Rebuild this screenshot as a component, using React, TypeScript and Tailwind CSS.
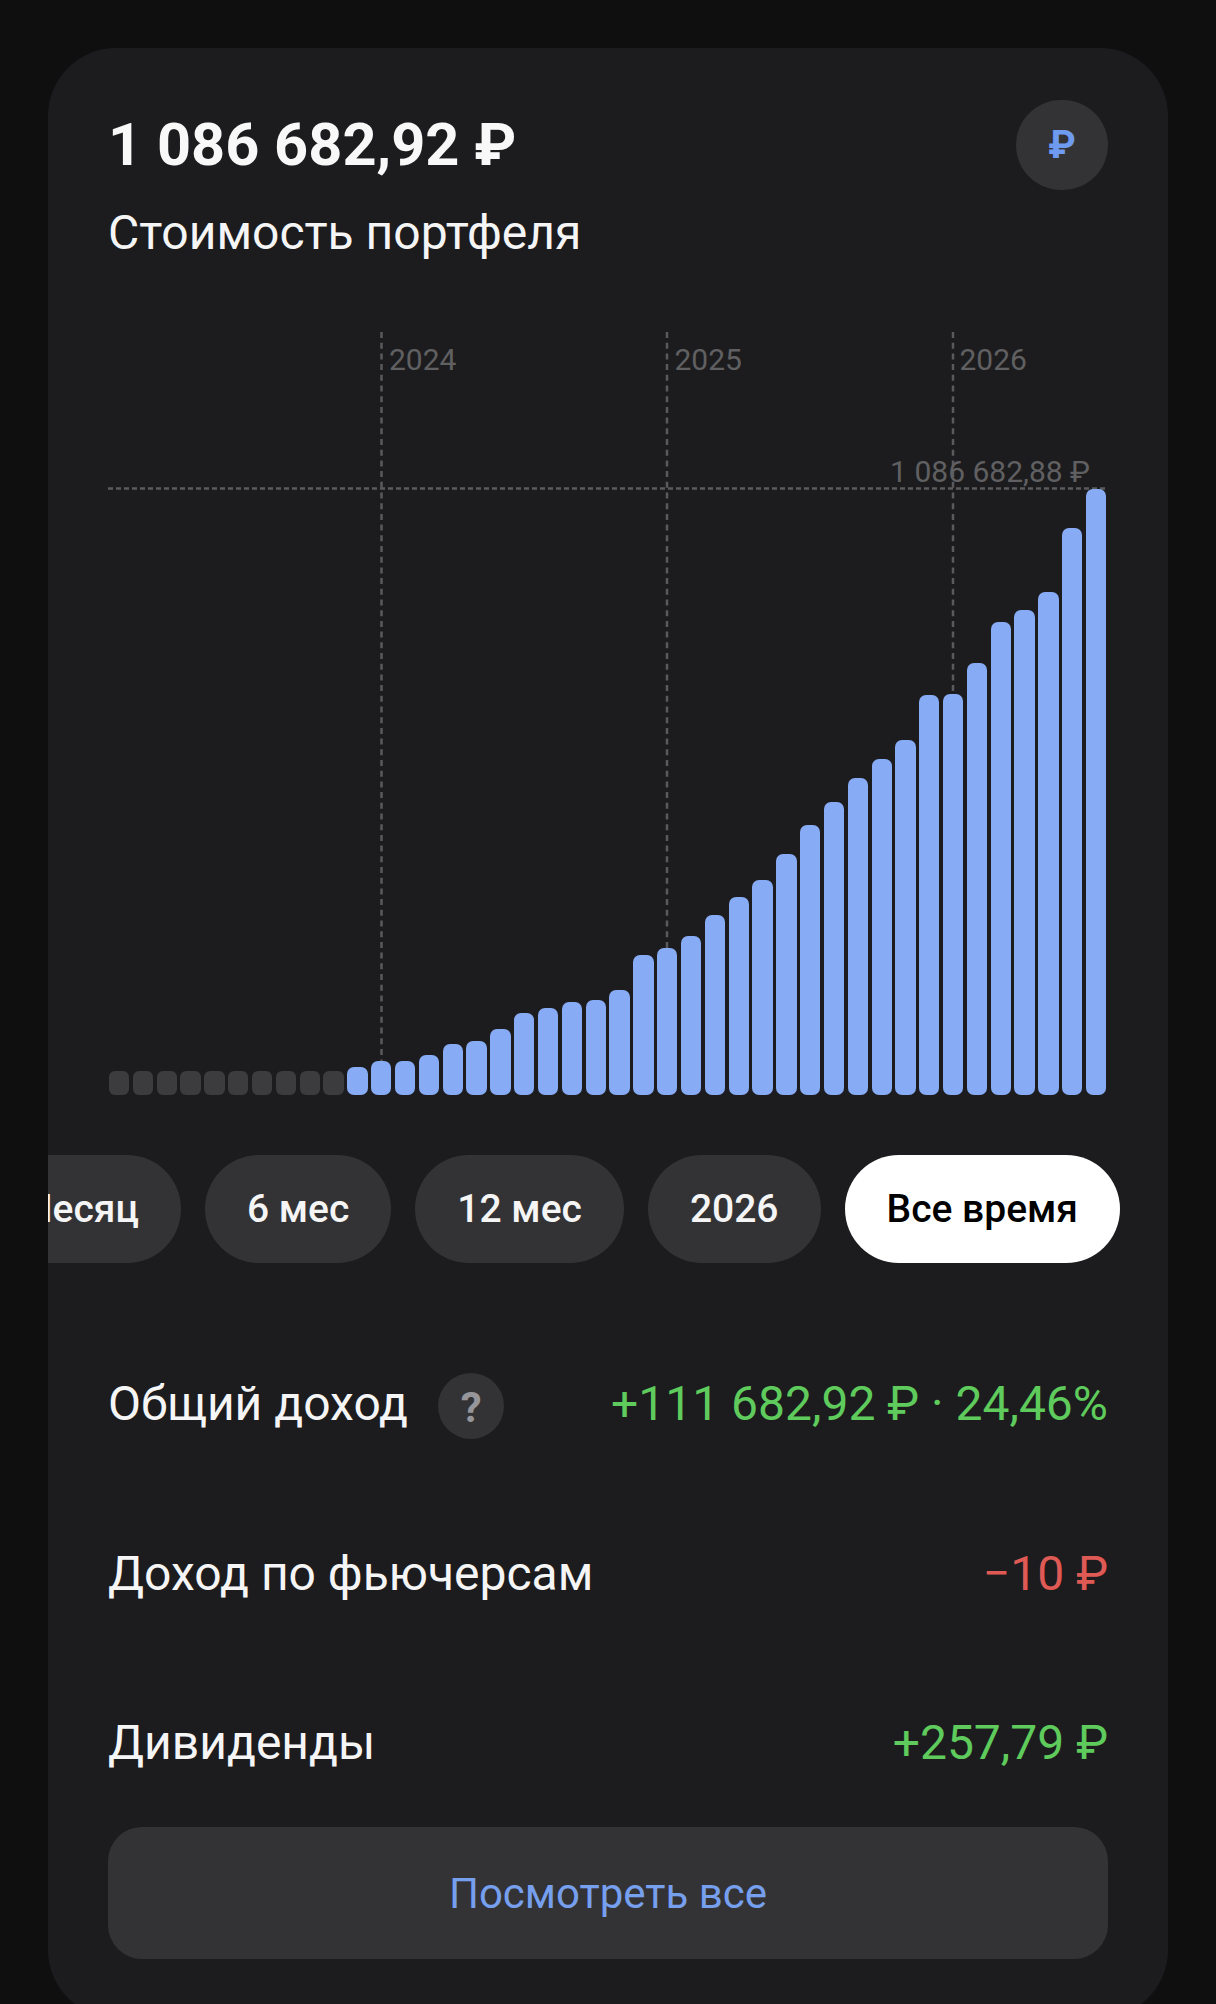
const tops = [1067,1061,1061,1055,1044,1041,1029,1013,1008,1002,1000,990,955,948,936,915,897,880,854,825,802,778,759,740,695,694,663,622,610,592,528,489];

function GridLines() {
  return (
    <svg className="absolute left-0 top-0" width="1000" height="763" fill="none">
      {[273.5, 559, 845].map((x) => (
        <line key={x} x1={x} y1="0" x2={x} y2="763" stroke="#5a5a5c" strokeWidth="2.5" strokeDasharray="6 4.7" />
      ))}
      <line x1="0" y1="156.5" x2="1000" y2="156.5" stroke="#5a5a5c" strokeWidth="2.5" strokeDasharray="5 3" />
    </svg>
  );
}

function Pill({ label, active }: { label: string; active?: boolean }) {
  return (
    <div className={`flex h-[108px] shrink-0 items-center rounded-full px-[42px] text-[39px] font-medium ${active ? "bg-white text-black" : "bg-[#333335] text-[#f5f5f6]"}`}>
      {label}
    </div>
  );
}

function Row({ label, children, mt }: { label: React.ReactNode; children: React.ReactNode; mt: string }) {
  return (
    <div className={`flex h-[66px] items-center justify-between ${mt}`}>
      <div className="flex items-center text-[48px] leading-[52px] text-[#f5f5f6]">{label}</div>
      <div className="text-[48px] leading-[52px]">{children}</div>
    </div>
  );
}

export default function App() {
  return (
    <div className="h-[2004px] overflow-hidden bg-[#0f0f10] px-12 pt-12 font-['Roboto',sans-serif]">
      <div className="h-[1970px] overflow-hidden rounded-[68px] bg-[#1c1c1e] pt-[52px]">
        <div className="flex items-start justify-between px-[60px]">
          <div>
            <div className="mt-[11px] text-[59.5px] font-bold leading-[68px] text-[#f8f8f9]">1 086 682,92 ₽</div>
            <div className="mt-[28px] text-[48px] leading-[52px] text-[#f5f5f6]">Стоимость портфеля</div>
          </div>
          <div className="flex h-[90px] w-[92px] items-center justify-center rounded-full bg-[#333335] text-[39px] font-bold leading-none text-[#6e9bef]">₽</div>
        </div>

        <div className="relative mx-[60px] mt-[73px] h-[763px]">
          <GridLines />
          {[["2024", "left-[281px]"], ["2025", "left-[566.5px]"], ["2026", "left-[851.5px]"]].map(([y, pos]) => (
            <div key={y} className={`absolute top-[10px] text-[30px] leading-[36px] text-[#606062] ${pos}`}>{y}</div>
          ))}
          <div className="absolute right-[18px] top-[122px] text-[30px] leading-[36px] text-[#606062]">1 086 682,88 ₽</div>
          <div className="absolute bottom-0 left-[1px] flex w-[997px] items-end gap-[3.5px]">
            {Array.from({ length: 10 }).map((_, i) => (
              <div key={i} className="h-[24px] flex-1 rounded-[6px] bg-[#3c3c3e]" />
            ))}
            {tops.map((t, i) => (
              <div key={i} className="flex-1 rounded-[7px] bg-[#87acf5]" style={{ height: 1095 - t }} />
            ))}
          </div>
        </div>

        <div className="mt-[60px] flex justify-end gap-6 overflow-hidden pr-[48px]">
          <Pill label="Месяц" />
          <Pill label="6 мес" />
          <Pill label="12 мес" />
          <Pill label="2026" />
          <Pill label="Все время" active />
        </div>

        <div className="mx-[60px]">
          <Row
            mt="mt-[110px]"
            label={
              <>
                <span className="mb-[5px]">Общий доход</span>
                <span className="ml-[30px] flex h-[66px] w-[66px] items-center justify-center rounded-full bg-[#333335] pt-[4px] text-[42px] font-bold text-[#96969a]">?</span>
              </>
            }
          >
            <span className="relative bottom-[2.5px] text-[#5ecb5c]">+111 682,92 ₽ · 24,46%</span>
          </Row>
          <Row mt="mt-[102px]" label="Доход по фьючерсам">
            <span className="text-[#e05a55]">−10 ₽</span>
          </Row>
          <Row mt="mt-[103px]" label="Дивиденды">
            <span className="text-[#5ecb5c]">+257,79 ₽</span>
          </Row>
          <div className="mt-[51px] flex h-[132px] items-center justify-center rounded-[34px] bg-[#333335] text-[42px] text-[#769fee]">Посмотреть все</div>
        </div>
      </div>
    </div>
  );
}
